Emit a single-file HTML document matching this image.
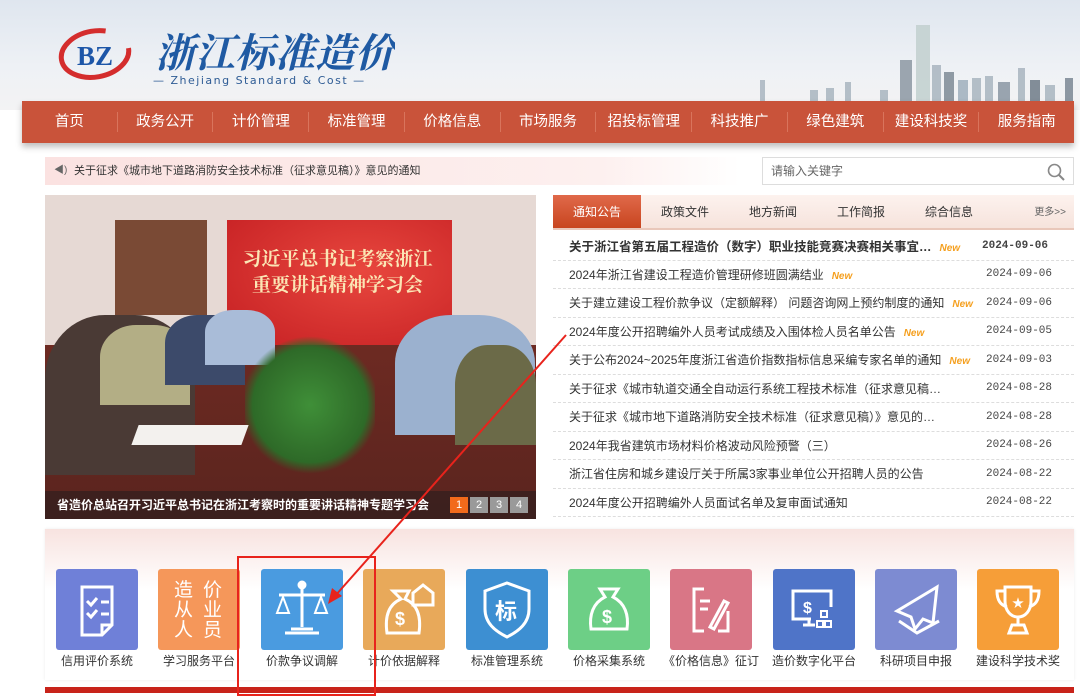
<!DOCTYPE html>
<html><head><meta charset="utf-8"><style>
*{margin:0;padding:0;box-sizing:border-box}
body{width:1080px;height:693px;overflow:hidden;font-family:"Liberation Sans","Noto Sans CJK SC",sans-serif;background:#fff;position:relative}
.abs{position:absolute}
.hdr{left:0;top:0;width:1080px;height:110px;background:linear-gradient(180deg,#dfe6ef 0%,#eef1f5 60%,#f3f3f4 100%)}
.nav{left:22px;top:101px;width:1052px;height:42px;background:#c9533a;box-shadow:0 4px 6px rgba(0,0,0,.25);display:flex;align-items:center}
.nav span{flex:1;text-align:center;color:#fff;font-size:14.5px;border-right:1px solid #d9745c;line-height:20px}
.nav span:last-child{border:none}
.notice{left:45px;top:157px;width:695px;height:28px;background:linear-gradient(90deg,#fbe2e1,#fdf0ef 80%,#fff);font-size:11px;color:#333;line-height:28px;padding-left:29px}
.search{left:762px;top:157px;width:312px;height:28px;border:1px solid #ddd;font-size:12px;color:#666;line-height:26px;padding-left:8px;background:#fff}
.photo{left:45px;top:195px;width:491px;height:324px;overflow:hidden;background:#e6d9d4}
.tabs{left:553px;top:195px;width:521px;height:35px;background:linear-gradient(#fdf2ee,#f6e3dc);display:flex;font-size:12px;color:#333;line-height:35px;border-bottom:2px solid #e9c7ba}
.tabs span{width:88px;text-align:center}
.list{left:553px;top:232px;width:521px}
.row{height:28.5px;border-bottom:1px dashed #ddd;display:flex;align-items:center;font-size:12px;color:#333;padding-left:16px}
.row .t{flex:1;white-space:nowrap;overflow:hidden}
.row .d{width:88px;font-size:11px;color:#444;font-family:"Liberation Mono",monospace}
.new{color:#f5a020;font-style:italic;font-weight:bold;font-size:10px;margin-left:8px}
.panel{left:45px;top:529px;width:1029px;height:151px;background:linear-gradient(#f8e3e0,#fff 40%);box-shadow:0 0 3px rgba(0,0,0,.08)}
.ic{position:absolute;top:569px;width:82px;height:81px;border-radius:3px}
.lb{position:absolute;top:652px;width:110px;text-align:center;font-size:12px;color:#333}
</style></head><body>
<div class="abs hdr"></div>
<svg class="abs" style="left:760px;top:20px" width="320" height="82"><g fill="#a9b5c0" opacity=".85">
<rect x="0" y="60" width="5" height="22"/><rect x="50" y="70" width="8" height="12"/><rect x="66" y="68" width="8" height="14"/><rect x="85" y="62" width="6" height="20"/><rect x="120" y="70" width="8" height="12"/><rect x="140" y="40" width="12" height="42" fill="#8d98a3"/><rect x="156" y="5" width="14" height="77" fill="#c2d0cf"/><rect x="172" y="45" width="9" height="37"/><rect x="184" y="52" width="10" height="30" fill="#7f8b96"/><rect x="198" y="60" width="10" height="22" fill="#9fb0bd"/><rect x="212" y="58" width="9" height="24"/><rect x="225" y="56" width="8" height="26"/><rect x="238" y="62" width="12" height="20" fill="#8a97a3"/><rect x="258" y="48" width="7" height="34"/><rect x="270" y="60" width="10" height="22" fill="#6f7c88"/><rect x="285" y="65" width="10" height="17"/><rect x="305" y="58" width="8" height="24" fill="#7b8894"/>
</g></svg>
<svg class="abs" style="left:55px;top:22px" width="340" height="68">
<ellipse cx="40" cy="32" rx="34" ry="23" fill="none" stroke="#d42d2d" stroke-width="5" stroke-dasharray="150 40" transform="rotate(-10 40 32)"/>
<text x="22" y="43" font-family="Liberation Serif" font-weight="bold" font-size="27" fill="#1d56a8">BZ</text>
<text x="100" y="45" font-family="Noto Serif CJK SC,serif" font-style="italic" font-weight="bold" font-size="40" fill="#1f5aa3">浙江标准造价</text>
<text x="98" y="62" font-family="DejaVu Sans" font-size="11" letter-spacing="1.5" fill="#2e5c95">— Zhejiang Standard &amp; Cost —</text>
</svg>
<div class="abs nav"><span>首页</span><span>政务公开</span><span>计价管理</span><span>标准管理</span><span>价格信息</span><span>市场服务</span><span>招投标管理</span><span>科技推广</span><span>绿色建筑</span><span>建设科技奖</span><span>服务指南</span></div>
<div class="abs notice"><span class="abs" style="left:9px;top:0;font-size:10px;color:#666">◀)</span>关于征求《城市地下道路消防安全技术标准（征求意见稿）》意见的通知</div>
<div class="abs search">请输入关键字<svg class="abs" style="right:8px;top:5px" width="18" height="18"><circle cx="7.5" cy="7.5" r="6" fill="none" stroke="#888" stroke-width="1.6"/><line x1="12" y1="12" x2="17" y2="17" stroke="#888" stroke-width="2"/></svg></div>
<div class="abs photo">
<div class="abs" style="left:70px;top:25px;width:92px;height:95px;background:#7a4a35"></div>
<div class="abs" style="left:182px;top:25px;width:225px;height:128px;background:radial-gradient(ellipse at 60% 40%,#e8473e,#c41e22)"></div>
<div class="abs" style="left:190px;top:50px;width:205px;text-align:center;color:#fbe6b5;font-weight:bold;font-size:19px;line-height:26px;font-family:'Noto Serif CJK SC',serif">习近平总书记考察浙江<br>重要讲话精神学习会</div>
<div class="abs" style="left:0;top:150px;width:491px;height:174px;background:linear-gradient(#6d2a22,#5a241e)"></div>
<div class="abs" style="left:0;top:120px;width:150px;height:160px;background:#4a3a35;border-radius:40% 40% 0 0"></div>
<div class="abs" style="left:55px;top:130px;width:90px;height:80px;background:#b3ae85;border-radius:40% 40% 0 0"></div>
<div class="abs" style="left:120px;top:120px;width:80px;height:70px;background:#3c4a6a;border-radius:40% 40% 0 0"></div>
<div class="abs" style="left:160px;top:115px;width:70px;height:55px;background:#a9bcd8;border-radius:40% 40% 0 0"></div>
<div class="abs" style="left:350px;top:120px;width:140px;height:120px;background:#9bb1cf;border-radius:40% 40% 0 0"></div>
<div class="abs" style="left:410px;top:150px;width:81px;height:100px;background:#6b6a48;border-radius:40% 40% 0 0"></div>
<div class="abs" style="left:200px;top:140px;width:130px;height:140px;background:radial-gradient(circle,#3f8f38,#2e6a28 60%,transparent 72%)"></div>
<div class="abs" style="left:90px;top:230px;width:110px;height:20px;background:#f3f1ee;transform:skew(-20deg)"></div>
<div class="abs" style="left:0;top:296px;width:491px;height:28px;background:rgba(40,30,30,.6);color:#fff;font-size:12px;line-height:28px;padding-left:12px;font-weight:bold">省造价总站召开习近平总书记在浙江考察时的重要讲话精神专题学习会</div>
<div class="abs" style="left:405px;top:302px;display:flex;gap:2px;font-size:11px;color:#fff;line-height:16px;text-align:center">
<span style="width:18px;background:#f26a1b">1</span><span style="width:18px;background:#9a9a9a">2</span><span style="width:18px;background:#9a9a9a">3</span><span style="width:18px;background:#9a9a9a">4</span></div>
</div>
<div class="abs tabs"><span style="background:linear-gradient(#e0694a,#c8451f);color:#fff">通知公告</span><span>政策文件</span><span>地方新闻</span><span>工作简报</span><span>综合信息</span><span style="flex:1;text-align:right;padding-right:8px;font-size:10px;color:#666">更多&gt;&gt;</span></div>
<div class="abs list">
<div class="row" style="font-weight:bold;font-size:12.5px"><span class="t">关于浙江省第五届工程造价（数字）职业技能竞赛决赛相关事宜…<span class="new">New</span></span><span class="d" style="font-weight:bold;width:92px">2024-09-06</span></div>
<div class="row"><span class="t">2024年浙江省建设工程造价管理研修班圆满结业<span class="new">New</span></span><span class="d">2024-09-06</span></div>
<div class="row"><span class="t">关于建立建设工程价款争议（定额解释） 问题咨询网上预约制度的通知<span class="new">New</span></span><span class="d">2024-09-06</span></div>
<div class="row"><span class="t">2024年度公开招聘编外人员考试成绩及入围体检人员名单公告<span class="new">New</span></span><span class="d">2024-09-05</span></div>
<div class="row"><span class="t">关于公布2024~2025年度浙江省造价指数指标信息采编专家名单的通知<span class="new">New</span></span><span class="d">2024-09-03</span></div>
<div class="row"><span class="t">关于征求《城市轨道交通全自动运行系统工程技术标准（征求意见稿…</span><span class="d">2024-08-28</span></div>
<div class="row"><span class="t">关于征求《城市地下道路消防安全技术标准（征求意见稿）》意见的…</span><span class="d">2024-08-28</span></div>
<div class="row"><span class="t">2024年我省建筑市场材料价格波动风险预警（三）</span><span class="d">2024-08-26</span></div>
<div class="row"><span class="t">浙江省住房和城乡建设厅关于所属3家事业单位公开招聘人员的公告</span><span class="d">2024-08-22</span></div>
<div class="row"><span class="t">2024年度公开招聘编外人员面试名单及复审面试通知</span><span class="d">2024-08-22</span></div>
</div>
<div class="abs panel"></div>
<div class="ic" style="left:56px;background:#6f80d8"><svg width="82" height="81"><g fill="none" stroke="#fff" stroke-width="3"><path d="M26 18h30v38l-10 10H26z"/><path d="M46 66v-10h10"/><path d="M31 32l4 4 6-7M31 44l4 4 6-7M45 33h8M45 45h8"/></g></svg></div>
<div class="ic" style="left:158px;background:#f5975a;color:#fff;font-size:19px;line-height:20px;padding:12px 0 0 16px;letter-spacing:10px">造价<br>从业<br>人员</div>
<div class="ic" style="left:261px;background:#4a9be0"><svg width="82" height="81"><g fill="none" stroke="#fff" stroke-width="3"><path d="M41 16v42M18 26h46M30 60h22M24 64h34"/><path d="M22 28l-6 16h12zM60 28l-6 16h12z" stroke-width="2"/><circle cx="41" cy="16" r="3" fill="#fff"/></g></svg></div>
<div class="ic" style="left:363px;background:#e8a95a"><svg width="82" height="81"><g fill="none" stroke="#fff" stroke-width="3"><path d="M30 22h16l-4 8c14 6 16 20 14 34H24c-2-14 0-28 14-34z"/><text x="32" y="56" font-size="18" fill="#fff" stroke="none" font-weight="bold">$</text><path d="M50 24l10-8 10 8v12H50z"/></g></svg></div>
<div class="ic" style="left:466px;background:#3d8fd2"><svg width="82" height="81"><path d="M41 14l22 8v18c0 14-10 22-22 28-12-6-22-14-22-28V22z" fill="none" stroke="#fff" stroke-width="3"/><text x="29" y="50" font-size="22" fill="#fff" font-weight="bold" font-family="Noto Sans CJK SC">标</text></svg></div>
<div class="ic" style="left:568px;background:#6dcf86"><svg width="82" height="81"><g fill="none" stroke="#fff" stroke-width="3"><path d="M32 20h18l-5 8c12 6 16 18 14 32H23c-2-14 2-26 14-32z"/></g><text x="34" y="54" font-size="18" fill="#fff" font-weight="bold">$</text></svg></div>
<div class="ic" style="left:670px;background:#d97686"><svg width="82" height="81"><g fill="none" stroke="#fff" stroke-width="3"><path d="M34 20h-10v42h10M48 62h10V42"/><path d="M30 32h10M30 40h8"/><path d="M40 58l14-26 4 2-14 26z"/></g></svg></div>
<div class="ic" style="left:773px;background:#4f74c8"><svg width="82" height="81"><g fill="none" stroke="#fff" stroke-width="3"><path d="M38 50H20V22h38v16M30 56h12M36 50v6"/><rect x="48" y="42" width="6" height="6" stroke-width="2"/><rect x="44" y="52" width="6" height="6" stroke-width="2"/><rect x="52" y="52" width="6" height="6" stroke-width="2"/></g><text x="30" y="44" font-size="16" fill="#fff" font-weight="bold">$</text></svg></div>
<div class="ic" style="left:875px;background:#7d8bd2"><svg width="82" height="81"><g fill="none" stroke="#fff" stroke-width="3"><path d="M62 18L22 42l14 6 4 12 8-10 10 4z"/><path d="M24 52l18 12 22-12"/></g></svg></div>
<div class="ic" style="left:977px;background:#f69e38"><svg width="82" height="81"><g fill="none" stroke="#fff" stroke-width="3"><path d="M28 18h26v14c0 10-6 16-13 16s-13-6-13-16zM28 22h-8c0 10 4 14 10 16M54 22h8c0 10-4 14-10 16M41 48v8M32 64h18l-3-8h-12z"/></g><text x="35" y="38" font-size="12" fill="#fff">★</text></svg></div>
<div class="lb" style="left:42px">信用评价系统</div><div class="lb" style="left:144px">学习服务平台</div><div class="lb" style="left:247px">价款争议调解</div><div class="lb" style="left:349px">计价依据解释</div><div class="lb" style="left:452px">标准管理系统</div><div class="lb" style="left:554px">价格采集系统</div><div class="lb" style="left:656px">《价格信息》征订</div><div class="lb" style="left:759px">造价数字化平台</div><div class="lb" style="left:861px">科研项目申报</div><div class="lb" style="left:963px">建设科学技术奖</div>
<div class="abs" style="left:45px;top:687px;width:1029px;height:6px;background:#c8231a"></div>
<div class="abs" style="left:237px;top:556px;width:139px;height:140px;border:2px solid #e8231c"></div>
<svg class="abs" style="left:0;top:0" width="1080" height="693"><line x1="566" y1="335" x2="335" y2="596" stroke="#e8231c" stroke-width="2"/><path d="M328 604l4-16 10 8z" fill="#e8231c"/></svg>
</body></html>
